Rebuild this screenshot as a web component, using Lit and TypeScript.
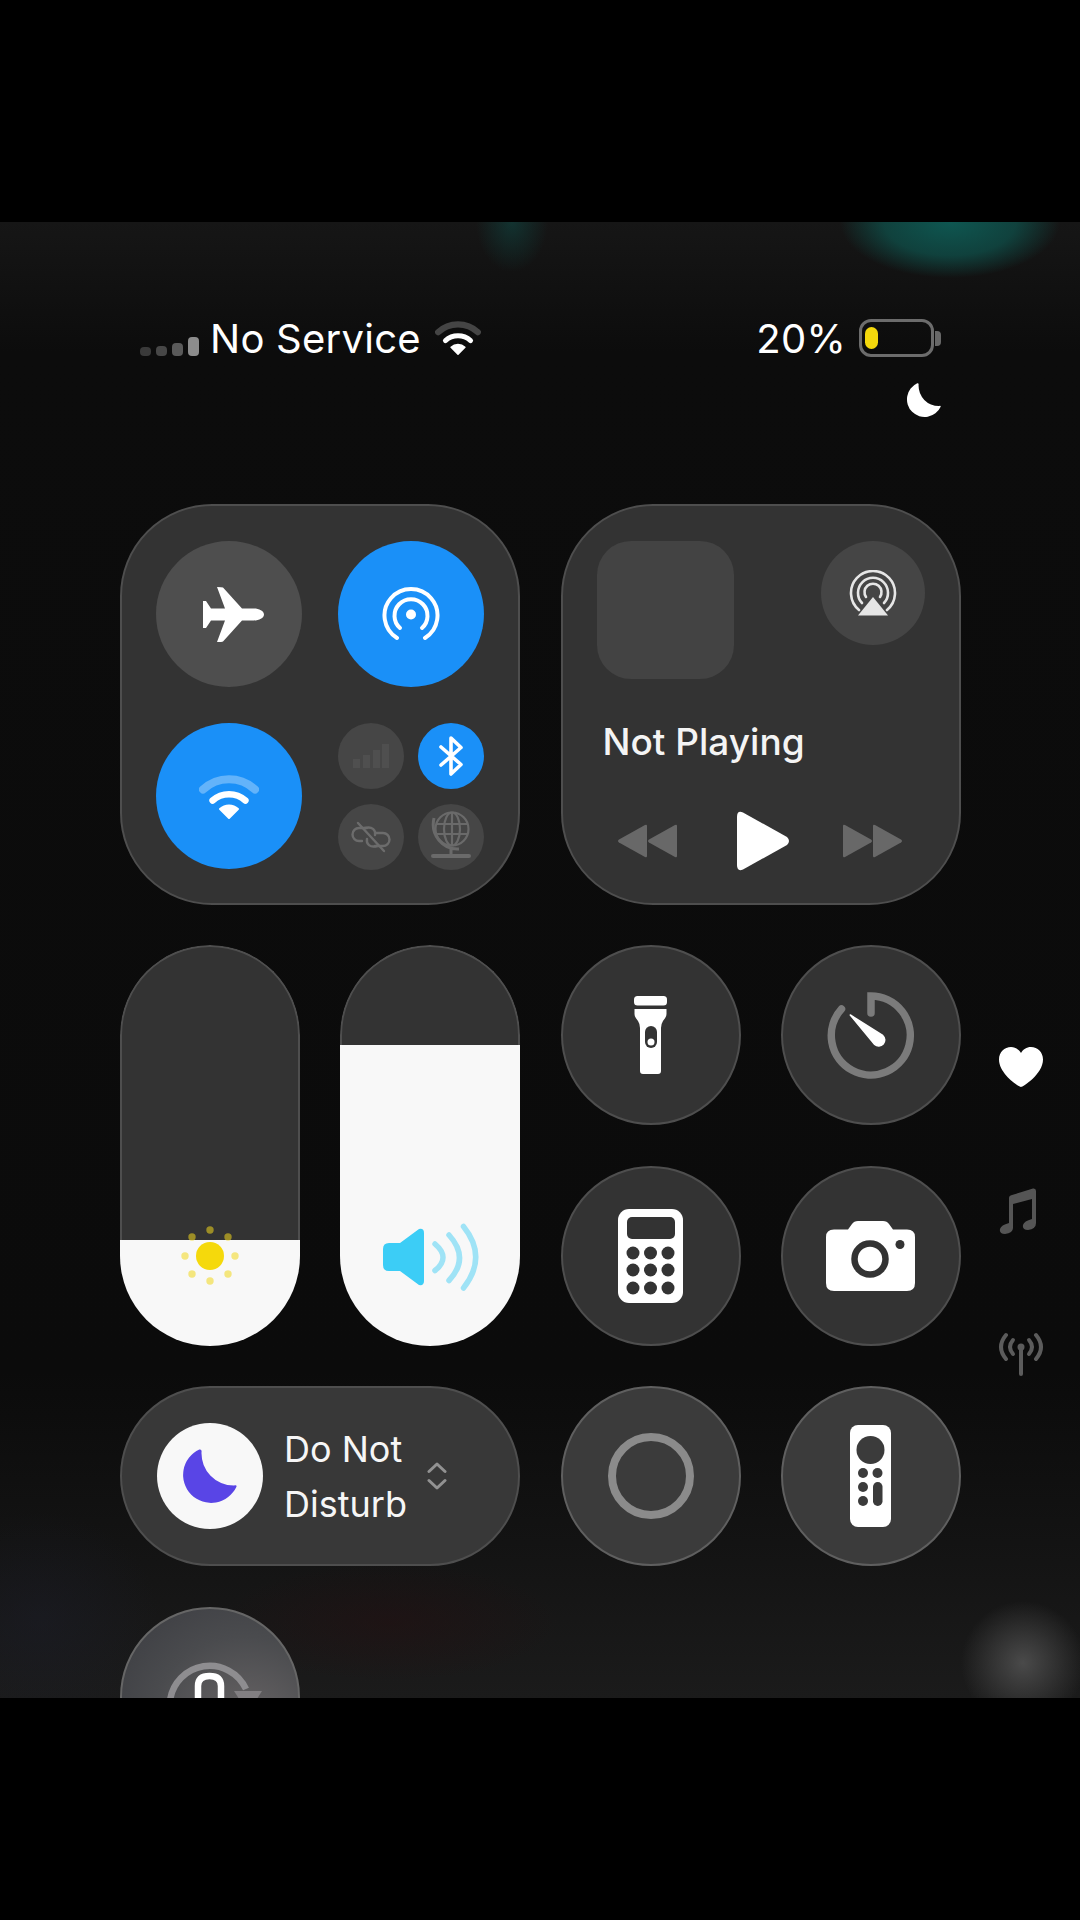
import { LitElement, css, html, svg } from 'lit';
import { customElement } from 'lit/decorators.js';

const wifi = (dim: string, full: string) => html`
  <svg class="wifi" viewBox="0 0 60 46">
    <path d="M4 15.5A38 38 0 0 1 56 15.5" fill="none" stroke=${dim} stroke-width="8" stroke-linecap="round"/>
    <path d="M13.6 26.5A24.5 24.5 0 0 1 46.4 26.5" fill="none" stroke=${full} stroke-width="6.5" stroke-linecap="round"/>
    <path d="M30 44L21 35A13 13 0 0 1 39 35Z" fill=${full} stroke=${full} stroke-width="2" stroke-linejoin="round"/>
  </svg>`;

const moon = (color: string, cls: string) => html`
  <svg class=${cls} viewBox="0 0 53 53">
    <path d="M18 .5A26 26 0 1 0 52.5 35Q53 33 50 34A30 30 0 0 1 20 3Q20.5 0 18 .5Z" fill=${color}/>
  </svg>`;

@customElement('app-root')
export class AppRoot extends LitElement {
  static get styles() {
    return css`
      :host {
        display: block;
        background: #000;
        padding: 222px 0;
        font-family: Inter, "Liberation Sans", sans-serif;
        color: #fff;
      }
      .frame {
        height: 1476px;
        overflow: hidden;
        background:
          radial-gradient(ellipse 110px 56px at 950px 0, rgba(14, 88, 82, .98), rgba(14, 84, 78, .7) 60%, transparent),
          radial-gradient(ellipse 36px 50px at 512px 0, rgba(16, 70, 66, .6), transparent),
          radial-gradient(circle 62px at 1023px 1441px, #4a4a4a, rgba(70, 70, 70, .55) 50%, transparent),
          radial-gradient(ellipse 170px 60px at 390px 1400px, rgba(40, 14, 16, .4), transparent),
          radial-gradient(ellipse 120px 110px at 40px 1400px, rgba(28, 30, 44, .4), transparent),
          linear-gradient(#161616, #0c0c0c 130px, #0b0b0b 1150px, #121212 1300px, #1b1b1b);
      }

      .status {
        display: flex;
        justify-content: space-between;
        align-items: flex-start;
        padding: 92px 139px 0 140px;
        height: 190px;
        box-sizing: border-box;
      }
      .status-left, .status-right {
        display: flex;
        align-items: center;
        height: 48px;
        font-size: 40px;
        letter-spacing: .25px;
      }
      .bars {
        display: flex;
        align-items: flex-end;
        gap: 5px;
        height: 20px;
        margin: 16px 11px 0 0;
      }
      .bars i {
        width: 11px;
        border-radius: 4px;
      }
      .wifi { width: 46px; height: 36px; }
      .status .wifi { margin: 0 0 0 14px; }
      .right-col { display: flex; flex-direction: column; align-items: flex-end; }
      .battery {
        display: flex;
        align-items: center;
        margin-left: 13px;
      }
      .battery-body {
        width: 75px;
        height: 38px;
        box-sizing: border-box;
        border: 3px solid #6c6c6c;
        border-radius: 12px;
        padding: 5px 3px;
      }
      .battery-body b {
        display: block;
        width: 13px;
        height: 100%;
        background: #f4d80c;
        border-radius: 7px;
      }
      .battery-nub {
        width: 6px;
        height: 15px;
        margin-left: 1px;
        background: #686868;
        border-radius: 0 4px 4px 0;
      }
      .status-moon { width: 36px; height: 36px; margin: 21px 0 0 0; display: block; }

      .grid {
        display: grid;
        grid-template-columns: repeat(4, 180px) 48px;
        grid-auto-rows: 180px;
        gap: 40.5px 40.25px;
        padding-left: 120px;
        margin-top: 92px;
      }
      .glass {
        background: #333;
        border: 2px solid #4e4e4e;
        box-sizing: border-box;
      }
      .card {
        grid-column: span 2;
        grid-row: span 2;
        border-radius: 92px;
        padding: 35px 34px;
      }
      .connect {
        display: grid;
        grid-template-columns: 146px 146px;
        grid-auto-rows: 146px;
        gap: 36px;
      }
      .round {
        border-radius: 50%;
        display: flex;
        align-items: center;
        justify-content: center;
      }
      .gray { background: #4e4e4e; }
      .blue { background: #1a90f8; }
      .blue .wifi { width: 60px; height: 46px; margin-top: 2px; }
      .dim { background: #464646; }
      .plane { margin-left: 8px; }
      .mini {
        display: grid;
        grid-template-columns: 66px 66px;
        grid-auto-rows: 66px;
        gap: 15px 14px;
      }

      .media { display: flex; flex-direction: column; }
      .media-top {
        display: flex;
        justify-content: space-between;
        align-items: flex-start;
        height: 137px;
      }
      .album {
        width: 137px;
        height: 138px;
        background: #434343;
        border-radius: 34px;
      }
      .airplay {
        width: 104px;
        height: 104px;
        background: #454545;
      }
      .now {
        font-size: 37px;
        font-weight: 500;
        line-height: 44px;
        margin: 42px 0 0 6px;
        color: #f4f4f4;
      }
      .transport {
        display: flex;
        align-items: center;
        height: 60px;
        margin: 47px 0 0 21px;
      }
      .back { width: 59px; height: 34px; margin-right: 60px; }
      .play { width: 53px; height: 60px; }
      .forward { width: 59px; height: 34px; margin-left: 53px; }

      .slider {
        grid-row: span 2;
        position: relative;
        display: flex;
        flex-direction: column;
        border-radius: 90px;
        overflow: hidden;
      }
      .slider-a { grid-column: 1; }
      .track {
        flex: 1;
        background: #333;
        border: 2px solid #4e4e4e;
        border-bottom: none;
        border-radius: 90px 90px 0 0;
      }
      .fill { background: #f8f8f8; }
      .sun {
        position: absolute;
        left: 50px;
        top: 271px;
        width: 80px;
        height: 80px;
      }
      .speaker {
        position: absolute;
        left: 43px;
        top: 278px;
        width: 96px;
        height: 68px;
      }

      .tile { border-radius: 50%; display: flex; align-items: center; justify-content: center; }
      .flash { width: 33px; height: 78px; }
      .timer { width: 90px; height: 90px; }
      .calc { width: 65px; height: 94px; }
      .camera { width: 89px; height: 70px; }
      .record {
        width: 86px;
        height: 86px;
        box-sizing: border-box;
        border: 8px solid #8b8b8b;
        border-radius: 50%;
      }
      .remote { width: 41px; height: 102px; }
      .light { background: #3b3b3b; border-color: #5f5f5f; }

      .dnd {
        grid-column: span 2;
        border-radius: 90px;
        display: flex;
        align-items: center;
        padding-left: 35px;
        background: #383838;
      }
      .dnd-disc {
        width: 106px;
        height: 106px;
        background: #f8f8f8;
        flex: none;
      }
      .dnd-moon { width: 57px; height: 57px; margin: 2px 3px 0 0; }
      .dnd-label {
        font-size: 36px;
        line-height: 55px;
        margin-left: 21px;
        padding-top: 2px;
        color: #f6f6f6;
      }
      .chevrons { width: 20px; height: 30px; margin-left: 20px; }

      .lock {
        position: relative;
        border-radius: 50%;
        background: radial-gradient(circle at 70% 70%, #6b6768, #4a4b4e 55%, #3a3b40);
        border-color: #666;
        overflow: hidden;
      }
      .lock-icon {
        position: absolute;
        left: 40px;
        top: 44px;
        width: 100px;
        height: 60px;
      }

      .side {
        grid-column: 5;
        grid-row: 3 / span 3;
        display: flex;
        flex-direction: column;
        align-items: center;
        padding-top: 102px;
        margin-left: -9px;
      }
      .heart { width: 44px; height: 40px; }
      .music { width: 38px; height: 46px; margin-top: 101px; margin-right: 5px; }
      .antenna { width: 46px; height: 44px; margin-top: 98px; }
    `;
  }

  private bars = [
    [9, '#3a3a3a'],
    [10, '#474747'],
    [13, '#5a5a5a'],
    [19, '#8c8c8c'],
  ] as const;

  render() {
    return html`
      <div class="frame">
        <div class="status">
          <div class="status-left">
            <div class="bars">
              ${this.bars.map(([h, c]) => html`<i style="height:${h}px;background:${c}"></i>`)}
            </div>
            <span>No Service</span>
            ${wifi('#454545', '#fff')}
          </div>
          <div class="right-col">
            <div class="status-right">
              <span>20%</span>
              <div class="battery">
                <div class="battery-body"><b></b></div>
                <div class="battery-nub"></div>
              </div>
            </div>
            ${moon('#fff', 'status-moon')}
          </div>
        </div>

        <div class="grid">
          <div class="card glass connect">
            <div class="round gray">
              <svg class="plane" width="61" height="55" viewBox="0 0 61 55">
                <path fill="#fff" d="M61 27.5C61 24 56 21.5 51 21.5H39L20 .5Q19 0 14 0L22 21.5H8L3 14H0V41H3L8 33.5H22L14 55Q19 55 20 54.5L39 33.5H51C56 33.5 61 31 61 27.5Z"/>
              </svg>
            </div>
            <div class="round blue">
              <svg width="60" height="56" viewBox="0 0 60 56" fill="none" stroke="#fff" stroke-width="4" stroke-linecap="round">
                <path d="M16 52A26.5 26.5 0 1 1 44 52"/>
                <path d="M19 42A16.5 16.5 0 1 1 41 42"/>
                <circle cx="30" cy="28.5" r="5" fill="#fff" stroke="none"/>
              </svg>
            </div>
            <div class="round blue">${wifi('#63b3fa', '#fff')}</div>
            <div class="mini">
              <div class="round dim">
                <svg width="36" height="24" viewBox="0 0 36 24" fill="#4f4f4f">
                  <rect x="0" y="15" width="7" height="9"/>
                  <rect x="10" y="11" width="7" height="13"/>
                  <rect x="20" y="6" width="7" height="18"/>
                  <rect x="29" y="0" width="7" height="24"/>
                </svg>
              </div>
              <div class="round blue">
                <svg width="25" height="40" viewBox="0 0 25 40" fill="none" stroke="#fff" stroke-width="3.6" stroke-linecap="round" stroke-linejoin="round">
                  <path d="M2 11L22 28.5L12 38V2L22 11.5L2 29"/>
                </svg>
              </div>
              <div class="round dim">
                <svg width="42" height="34" viewBox="0 0 42 34" fill="none" stroke="#6c6c6c" stroke-width="2.4" stroke-linecap="round">
                  <path d="M17 8H9A6.5 6.5 0 0 0 9 21H12"/>
                  <path d="M15 8C22 6 26 10 25 15"/>
                  <path d="M25 13H33A6.5 6.5 0 0 1 33 26H25"/>
                  <path d="M27 26C20 28 16 24 17 19"/>
                  <path d="M8 3L34 31"/>
                </svg>
              </div>
              <div class="round dim">
                <svg width="40" height="52" viewBox="0 0 40 52" fill="none" stroke="#6a6a6a" stroke-width="2.2">
                  <circle cx="21" cy="18" r="16.5"/>
                  <ellipse cx="21" cy="18" rx="8" ry="16.5"/>
                  <path d="M5 13H37M5 23H37M21 2V34"/>
                  <path d="M3 7C-1 24 12 39 28 38M20 38V44" stroke-width="3"/>
                  <path d="M2 45H38" stroke-width="4" stroke-linecap="round"/>
                </svg>
              </div>
            </div>
          </div>

          <div class="card glass media">
            <div class="media-top">
              <div class="album"></div>
              <div class="round airplay">
                <svg width="48" height="47" viewBox="0 0 48 47" fill="none" stroke="#e6e6e6" stroke-width="2.6" stroke-linecap="round">
                  <path d="M10 40A22 22 0 1 1 38 40"/>
                  <path d="M13 33A15 15 0 1 1 35 33"/>
                  <path d="M17 27A8.5 8.5 0 1 1 31 27"/>
                  <path d="M24 27L39 45.5H9Z" fill="#e6e6e6" stroke="none"/>
                </svg>
              </div>
            </div>
            <div class="now">Not Playing</div>
            <div class="transport">
              <svg class="back" viewBox="0 0 59 34" fill="#686868">
                <path d="M29 2Q29 0 27 1L1 15.5Q-1 17 1 18.500L27 33Q29 34 29 32Z"/>
                <path d="M59 2Q59 0 57 1L31 15.5Q29 17 31 18.500L57 33Q59 34 59 32Z"/>
              </svg>
              <svg class="play" viewBox="0 0 53 60">
                <path fill="#fff" d="M0 6Q0 -1 6 1.500L50 26Q54 30 50 34L6 58.500Q0 61 0 54Z"/>
              </svg>
              <svg class="forward" viewBox="0 0 59 34" fill="#686868">
                <path d="M0 2Q0 0 2 1L28 15.5Q30 17 28 18.500L2 33Q0 34 0 32Z"/>
                <path d="M30 2Q30 0 32 1L58 15.5Q60 17 58 18.500L32 33Q30 34 30 32Z"/>
              </svg>
            </div>
          </div>

          <div class="slider slider-a">
            <div class="track"></div>
            <div class="fill" style="height:106px"></div>
            <svg class="sun" viewBox="0 0 80 80">
              <circle cx="40" cy="40" r="14" fill="#f5d90d"/>
              <g fill="#f2d81c" opacity=".55">
                <circle cx="40" cy="14" r="3.700"/>
                <circle cx="22" cy="21" r="3.700"/>
                <circle cx="58" cy="21" r="3.700"/>
                <circle cx="15" cy="40" r="3.700"/>
                <circle cx="65" cy="40" r="3.700"/>
                <circle cx="22" cy="58" r="3.700"/>
                <circle cx="58" cy="58" r="3.700"/>
                <circle cx="40" cy="65" r="3.700"/>
              </g>
            </svg>
          </div>

          <div class="slider">
            <div class="track"></div>
            <div class="fill" style="height:301px"></div>
            <svg class="speaker" viewBox="0 -5 96 68">
              <path fill="#3ccdf6" d="M36 1Q41 0 41 5V53Q41 58 36 57L17 43H6Q0 43 0 37V21Q0 15 6 15H17Z"/>
              <g fill="none" stroke="#9fe3f6" stroke-width="5.5" stroke-linecap="round">
                <path d="M52 16Q68 29.500 52 42.500"/>
                <path d="M66 7Q87 30 66 52.500"/>
                <path d="M80.500 -1.500Q105 29 80.500 60"/>
              </g>
            </svg>
          </div>

          <div class="tile glass">
            <svg class="flash" viewBox="0 0 33 78">
              <rect width="33" height="9.500" rx="3.500" fill="#fff"/>
              <path fill="#fff" d="M.5 13H32.500V18Q32.500 21 29 25Q27 28 27 32V75Q27 78 24 78H9Q6 78 6 75V32Q6 28 4 25Q.5 21 .5 18Z"/>
              <rect x="11" y="30" width="12" height="22" rx="6" fill="#333"/>
              <circle cx="17" cy="46" r="3.500" fill="#fff"/>
            </svg>
          </div>
          <div class="tile glass">
            <svg class="timer" viewBox="0 0 90 90">
              <path d="M45 23V6A39.500 39.500 0 1 1 15.500 19" fill="none" stroke="#7b7b7b" stroke-width="7.500" stroke-linecap="round"/>
              <path d="M24.300 25L56.700 45.500A6 6 0 0 1 48.700 54.500Z" fill="#fff" stroke="#fff" stroke-width="1.500" stroke-linejoin="round"/>
            </svg>
          </div>
          <div class="tile glass">
            <svg class="calc" viewBox="0 0 65 94">
              <rect width="65" height="94" rx="11" fill="#fff"/>
              <rect x="9" y="8" width="48" height="22" rx="5" fill="#333"/>
              <g fill="#333">
                ${[44, 61, 79].map((y) => [15, 32.5, 50].map((x) => svg`<circle cx=${x} cy=${y} r="6.500"></circle>`))}
              </g>
            </svg>
          </div>
          <div class="tile glass">
            <svg class="camera" viewBox="0 0 89 70">
              <path fill="#fff" d="M8 8.500H22L26 3Q28 0 32 0H57Q61 0 63 3L67 8.500H81Q89 8.500 89 16V62Q89 70 81 70H8Q0 70 0 62V16Q0 8.500 8 8.500Z"/>
              <circle cx="44" cy="38" r="15.500" fill="none" stroke="#333" stroke-width="6.500"/>
              <circle cx="74" cy="23.500" r="4.500" fill="#333"/>
            </svg>
          </div>

          <div class="dnd glass">
            <div class="round dnd-disc">${moon('#5945e6', 'dnd-moon')}</div>
            <div class="dnd-label">Do Not<br />Disturb</div>
            <svg class="chevrons" viewBox="0 0 20 30" fill="none" stroke="#929292" stroke-width="3" stroke-linecap="round" stroke-linejoin="round">
              <path d="M2 10.500L10 3L18 10.500"/>
              <path d="M2 19.500L10 27L18 19.500"/>
            </svg>
          </div>
          <div class="tile glass light"><div class="record"></div></div>
          <div class="tile glass light">
            <svg class="remote" viewBox="0 0 41 102">
              <rect width="41" height="102" rx="8" fill="#fff"/>
              <g fill="#3b3b3b">
                <circle cx="20.500" cy="25" r="14"/>
                <circle cx="13" cy="48" r="5"/>
                <circle cx="27.500" cy="48" r="5"/>
                <circle cx="13" cy="62" r="5"/>
                <circle cx="13" cy="76" r="5"/>
                <rect x="23" y="57" width="9.500" height="24" rx="4.700"/>
              </g>
            </svg>
          </div>

          <div class="lock glass">
            <svg class="lock-icon" viewBox="0 0 100 60" fill="none">
              <path d="M8 48A40 40 0 0 1 84 36" stroke="#8e8d90" stroke-width="6.500"/>
              <path d="M72 38H100L86 60Z" fill="#827f82"/>
              <path d="M36 60V33Q36 23 47.500 23Q59 23 59 33V45" stroke="#fff" stroke-width="6.500"/>
            </svg>
          </div>

          <div class="side">
            <svg class="heart" viewBox="0 0 44 40">
              <path fill="#fff" d="M22 40C20 40 0 27 0 12.500C0 5 5.500 0 12 0C16.500 0 20 2.500 22 6C24 2.500 27.500 0 32 0C38.500 0 44 5 44 12.500C44 27 24 40 22 40Z"/>
            </svg>
            <svg class="music" viewBox="0 0 38 46" fill="#555">
              <path d="M10 10Q10 7.500 13 7L34 .5Q37 0 37 3V35Q37 41 29 42Q23 42 24 37Q25 33 33 31V11L14 16V40Q14 45 6 46Q0 46 1 41Q2 37 10 35Z"/>
            </svg>
            <svg class="antenna" viewBox="0 0 46 44" fill="none" stroke="#5c5c5c" stroke-width="4" stroke-linecap="round">
              <path d="M8 3Q-2 15 8 27"/>
              <path d="M38 3Q48 15 38 27"/>
              <path d="M15 8Q9 15 15 22"/>
              <path d="M31 8Q37 15 31 22"/>
              <circle cx="23" cy="15" r="3.500" fill="#5c5c5c" stroke="none"/>
              <path d="M23 17V42"/>
            </svg>
          </div>
        </div>
      </div>
    `;
  }
}
